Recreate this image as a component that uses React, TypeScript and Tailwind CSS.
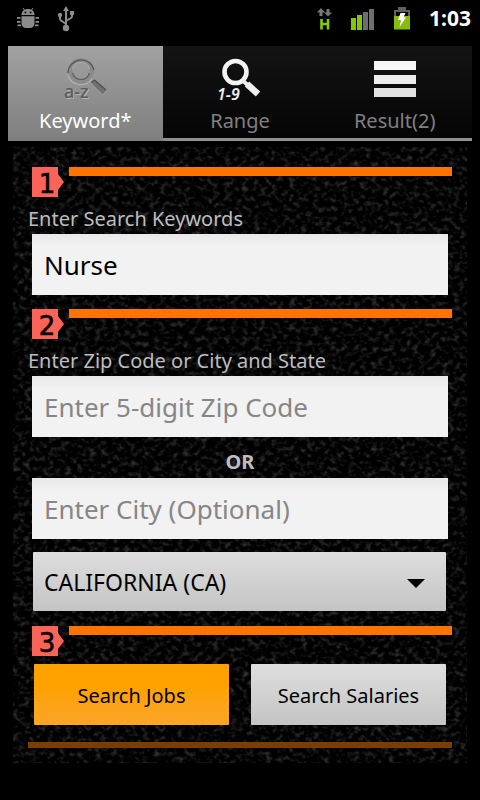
import { useState } from "react";

function BugIcon() {
  return (
    <svg width="22" height="22" viewBox="0 0 22 22" fill="#8c8c8c" aria-hidden="true">
      <path d="M6 0 7.600 2M16 0 14.400 2" stroke="#8c8c8c" strokeWidth="1" />
      <path d="M4.500 7C4.500 3.300 7 1 11 1s6.500 2.300 6.500 6z" />
      <circle cx="8.400" cy="4.500" r=".9" fill="#000" />
      <circle cx="13.600" cy="4.500" r=".9" fill="#000" />
      <path d="M4.500 8.300h13v7c0 3-2 4.700-4.500 4.700H9c-2.500 0-4.500-1.700-4.500-4.700z" />
      <path d="M0 9h3.500v1.800H0zM0 13h3.500v1.800H0zM.5 16.500H4v1.800H.5zM18.500 9H22v1.800h-3.500zM18.500 13H22v1.800h-3.500zM18 16.500h3.500v1.800H18z" />
    </svg>
  );
}

function UsbIcon() {
  return (
    <svg width="18" height="26" viewBox="0 0 18 26" fill="none" stroke="#8c8c8c" strokeWidth="2" aria-hidden="true">
      <path d="M9 4v18M9 18l-5-3.500c-.8-.6-1-1.200-1-2V9M9 15l5-3c.8-.5 1-1.200 1-2V7" />
      <path d="M9 0 12 5H6z" fill="#8c8c8c" stroke="none" />
      <circle cx="9" cy="22" r="3.200" fill="#8c8c8c" stroke="none" />
      <circle cx="3" cy="9" r="2.200" fill="#8c8c8c" stroke="none" />
      <path d="M13 5h4v4h-4z" fill="#8c8c8c" stroke="none" />
    </svg>
  );
}

function DataIcon() {
  return (
    <svg width="16" height="23" viewBox="0 0 16 23" aria-hidden="true">
      <path d="M4 0 8 4.500H5.500V8h-3V4.500H0zM11 8.500 7 4.500h2.500V1h3v3.500H15z" fill="#777" />
      <path d="M4.500 11v10.500M11 11v10.500M4 16h7" stroke="#86cc00" strokeWidth="2.600" fill="none" />
    </svg>
  );
}

function SignalIcon() {
  return (
    <svg width="24" height="23" viewBox="0 0 24 23" aria-hidden="true">
      <path d="M0 10h5v12H0zM6 7h5v15H6z" fill="#86c800" />
      <path d="M12 4h5v18h-5zM18 1h5v21h-5z" fill="#6e6e6e" />
    </svg>
  );
}

function BatteryIcon() {
  return (
    <svg width="18" height="24" viewBox="0 0 18 24" aria-hidden="true">
      <path d="M1 9V3h4V0h8v3h4v6h-2V5H3v4z" fill="#5f5f5f" />
      <path d="M1 9h16v13.500H1z" fill="#86bc0a" />
      <path d="M7.500 6h5l-2 4.500H13L6.500 20l1.500-7H5z" fill="#fff" />
    </svg>
  );
}

function KeywordIcon() {
  return (
    <svg width="48" height="48" viewBox="0 0 48 48" className="overflow-visible" aria-hidden="true">
      <circle cx="20" cy="16" r="10.800" fill="none" stroke="#8b8b8b" strokeWidth="4.400" />
      <path d="M7 20a13.300 13.300 0 0 0 24 3.500" fill="none" stroke="#b2b2b2" strokeWidth="1.200" />
      <path d="M11.500 14a8.800 8.800 0 0 1 17 0" fill="none" stroke="#aeaeae" strokeWidth="1" />
      <path d="M7 18a13.200 13.200 0 0 1 26-3" fill="none" stroke="#555" strokeWidth="1.200" />
      <path d="M11.500 18a8.800 8.800 0 0 0 17 0" fill="none" stroke="#5c5c5c" strokeWidth="1.200" />
      <path d="m30 28 3.500-3 12 10.500-4 4.500z" fill="#707070" stroke="#b0b0b0" strokeWidth=".6" />
      <path d="m30.500 27.500 3-2.500 11.500 10" fill="none" stroke="#4c4c4c" strokeWidth="1.200" />
      <text x="4" y="44" fontSize="18" fontWeight="500" fill="#b4b4b4" className="font-['Noto_Sans',sans-serif]">a-z</text>
      <text x="3" y="43" fontSize="18" fontWeight="500" fill="#5c5c5c" className="font-['Noto_Sans',sans-serif]">a-z</text>
    </svg>
  );
}

function RangeIcon() {
  return (
    <svg width="48" height="48" viewBox="0 0 48 48" className="overflow-visible" aria-hidden="true">
      <circle cx="19.500" cy="17" r="11" fill="none" stroke="#f4f4f4" strokeWidth="4.600" />
      <path d="m26 25 8 7" stroke="#eee" strokeWidth="4" />
      <path d="m31 29 11 10" stroke="#eee" strokeWidth="6.500" />
      <text x="1" y="45" fontSize="16" fontWeight="600" fontStyle="italic" fill="#eee" className="font-['Noto_Sans',sans-serif]">1-9</text>
    </svg>
  );
}

function ResultIcon() {
  return (
    <svg width="48" height="48" viewBox="0 0 48 48" aria-hidden="true">
      <path d="M3 6h42v9H3z" fill="#f6f6f6" />
      <path d="M3 20h42v9H3z" fill="#ededed" />
      <path d="M3 33h42v9H3z" fill="#e2e2e2" />
    </svg>
  );
}

const tabs = [
  { label: "Keyword*", Icon: KeywordIcon },
  { label: "Range", Icon: RangeIcon },
  { label: "Result(2)", Icon: ResultIcon },
];

function Texture() {
  return (
    <svg className="absolute inset-0 h-full w-full" aria-hidden="true">
      <filter id="grain" x="0" y="0" width="100%" height="100%" colorInterpolationFilters="sRGB">
        <feTurbulence type="fractalNoise" baseFrequency="0.17 0.2" numOctaves="2" seed="7" />
        <feColorMatrix values="0.5 0 0 0 -0.235  0.5 0 0 0 -0.235  0.5 0 0 0 -0.235  0 0 0 0 1" />
      </filter>
      <rect width="100%" height="100%" filter="url(#grain)" />
    </svg>
  );
}

function StepHeader({ step }: { step: number }) {
  return (
    <div className="flex h-[31px] items-start gap-[5px] pl-1">
      <span className="flex items-center">
        <span className="flex h-[30px] w-[26px] items-center justify-center bg-[#fa6358] pt-1 pl-1 font-['DejaVu_Sans',sans-serif] text-[26px] text-black [-webkit-text-stroke:0.6px_black]">
          {step}
        </span>
        <svg width="6" height="16" viewBox="0 0 6 16" aria-hidden="true">
          <path d="M0 0 6 8 0 16z" fill="#fa6358" />
        </svg>
      </span>
      <span className="h-[9px] flex-1 bg-[#ff7300]" />
    </div>
  );
}

const fieldClass =
  "block h-[61px] w-full bg-linear-to-b from-[#e8e8e8] to-[#f2f2f2] to-20% px-3 text-[26px] text-black outline-none placeholder:text-[#868686]";

export default function App() {
  const [active, setActive] = useState(0);
  const [keywords, setKeywords] = useState("Nurse");

  return (
    <div className="min-h-screen bg-black font-['Noto_Sans',sans-serif]">
      <header className="flex h-[38px] items-center justify-between pr-[9px] pl-[17px]">
        <div className="flex items-center gap-[18px]">
          <BugIcon />
          <UsbIcon />
        </div>
        <div className="flex items-center gap-[18px]">
          <DataIcon />
          <SignalIcon />
          <BatteryIcon />
          <time className="text-[21px] font-bold text-white">1:03</time>
        </div>
      </header>

      <nav className="mx-2 mt-2 grid h-[95px] grid-cols-3">
        {tabs.map(({ label, Icon }, i) => (
          <button
            key={label}
            type="button"
            aria-pressed={active === i}
            onClick={() => setActive(i)}
            className={
              active === i
                ? "flex flex-col items-center border-b-[3px] border-[#808080] bg-linear-to-b from-[#a2a2a2] to-[#808080] pt-[9px] text-white"
                : "flex flex-col items-center border-b-[3px] border-[#8f8f8f] bg-linear-to-b from-[#141414] to-[#050505] pt-[9px] text-[#808080]"
            }
          >
            <Icon />
            <span className="mt-[5px] text-xl leading-[26px]">{label}</span>
          </button>
        ))}
      </nav>

      <main className="relative mx-[13px] mt-[6px]">
        <Texture />
        <form className="relative px-[15px] pt-5 pb-[15px]" onSubmit={(e) => e.preventDefault()}>
          <StepHeader step={1} />
          <label htmlFor="keywords" className="mt-2 block h-7 text-xl leading-[25px] text-[#bebebe]">
            Enter Search Keywords
          </label>
          <div className="px-1">
            <input id="keywords" value={keywords} onChange={(e) => setKeywords(e.target.value)} className={fieldClass} />
          </div>

          <div className="mt-[14px]">
            <StepHeader step={2} />
          </div>
          <label htmlFor="zip" className="mt-2 block h-7 text-xl leading-[25px] text-[#bebebe]">
            Enter Zip Code or City and State
          </label>
          <div className="px-1">
            <input id="zip" placeholder="Enter 5-digit Zip Code" className={fieldClass} />
            <p className="pt-3 pb-1 text-center text-xl leading-[25px] font-bold text-[#bebebe]">OR</p>
            <input aria-label="City" placeholder="Enter City (Optional)" className={fieldClass} />
          </div>

          <div className="relative mt-[13px] mr-[6px] ml-[5px]">
            <select
              aria-label="State"
              className="block h-[59px] w-full appearance-none rounded-[1px] bg-linear-to-b from-[#dedede] to-[#c4c4c4] px-[11px] pt-[2px] text-[23px] text-black outline-none"
            >
              <option>CALIFORNIA (CA)</option>
            </select>
            <svg className="pointer-events-none absolute top-[27px] right-[21px]" width="18" height="9" viewBox="0 0 18 9" aria-hidden="true">
              <path d="M0 0h18L9 9z" fill="#000" />
            </svg>
          </div>

          <div className="mt-[15px]">
            <StepHeader step={3} />
          </div>
          <div className="mt-[7px] grid grid-cols-2 gap-[22px] px-[6px] text-xl text-black">
            <button type="submit" className="h-[61px] rounded-[1px] bg-linear-to-b from-[#ffa200] from-40% to-[#fba526] pt-[2px]">
              Search Jobs
            </button>
            <button type="button" className="h-[61px] rounded-[1px] bg-linear-to-b from-[#dfdfdf] to-[#c4c4c4] pt-[2px]">
              Search Salaries
            </button>
          </div>
          <div className="mt-[17px] h-[6px] bg-[#7a3e00]" />
        </form>
      </main>
    </div>
  );
}
